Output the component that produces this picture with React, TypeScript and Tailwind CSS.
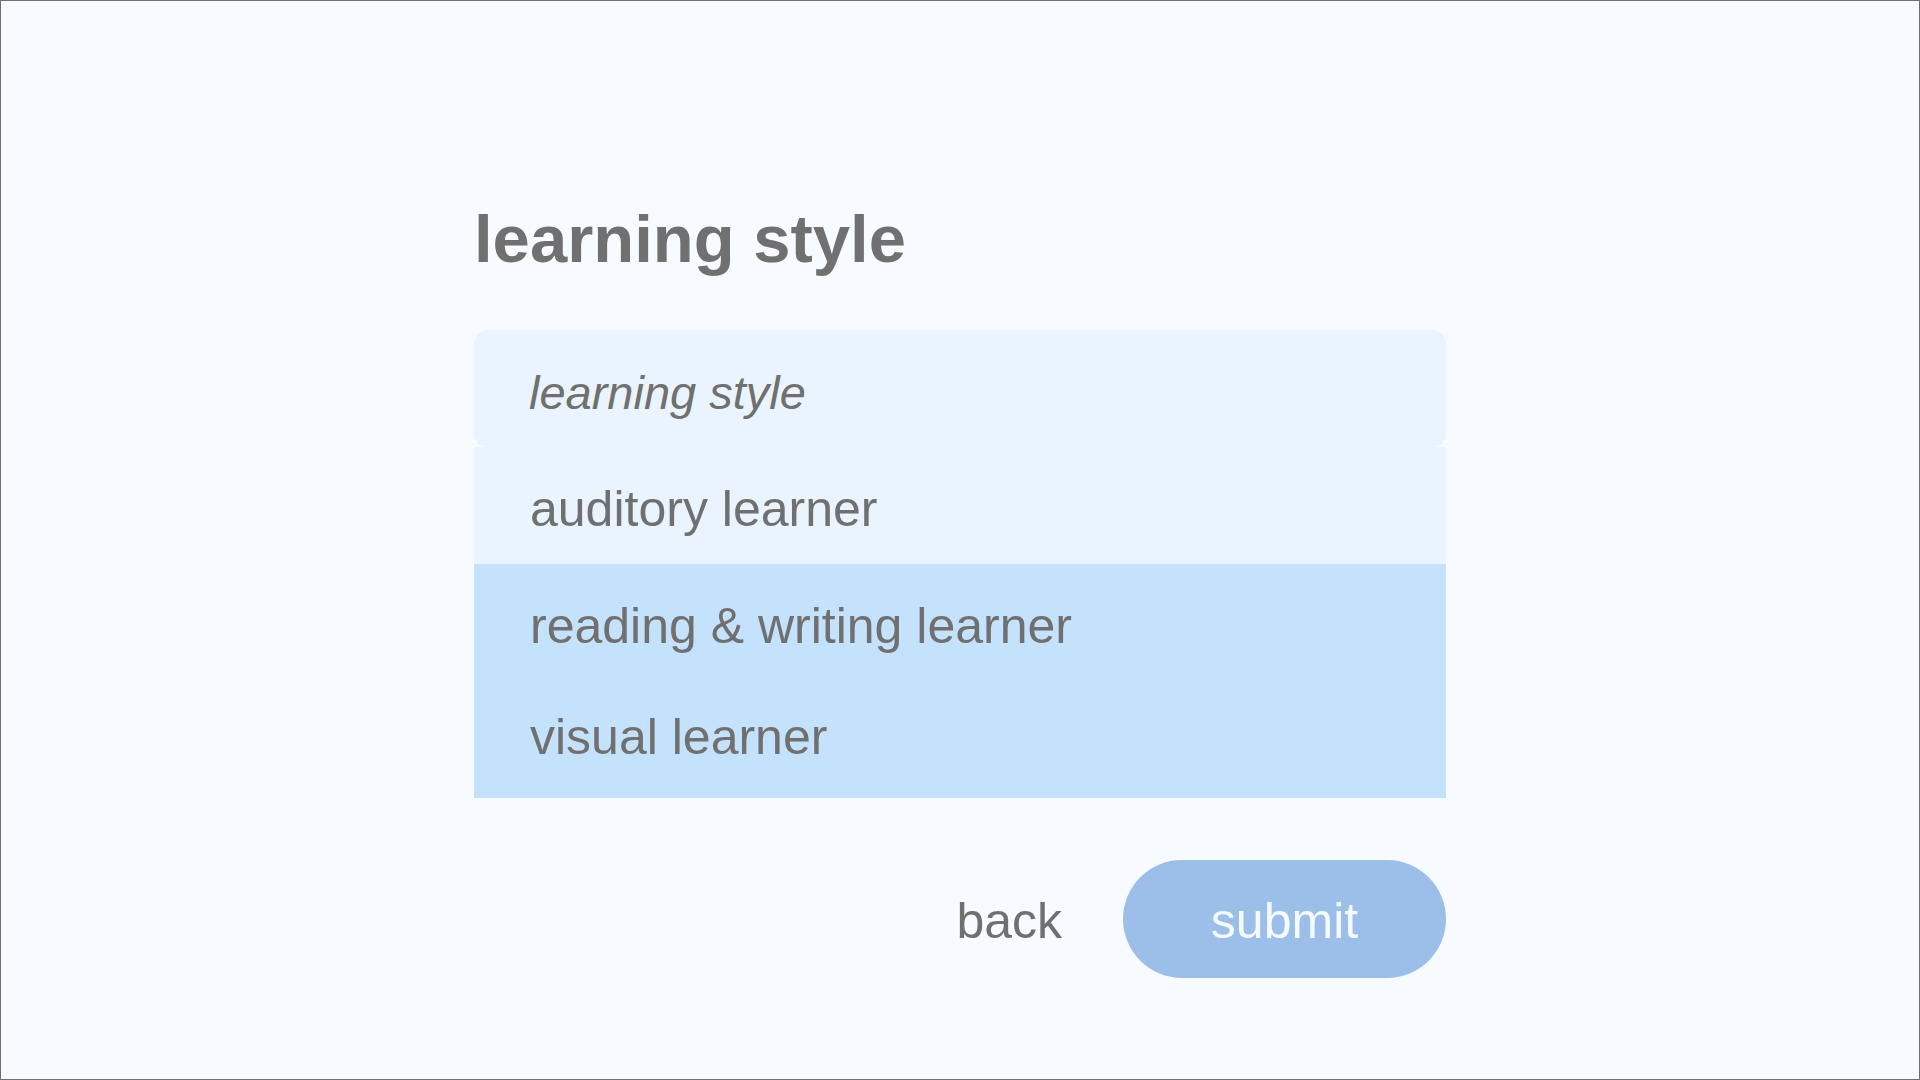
import { useState } from 'react'

const font = 'font-["Liberation_Sans",Helvetica,Arial,sans-serif]'

const options = [
  { label: 'auditory learner', highlighted: false },
  { label: 'reading & writing learner', highlighted: true },
  { label: 'visual learner', highlighted: true },
]

export default function App() {
  const [value, setValue] = useState('')

  return (
    <div className={`box-border h-screen w-full border border-[#6f6f6f] bg-[#f7fbff] ${font} text-[#707070]`}>
      <div className="mx-auto flex w-[972px] flex-col pt-[204px]">
        <h1 className="text-[67px] font-bold leading-none">learning style</h1>

        <input
          className="mt-[58px] h-[117px] w-full rounded-[13px] bg-[#eaf4fe] px-[55px] pt-[7px] text-[47px] italic text-[#707070] outline-none placeholder:italic placeholder:text-[#707070]"
          placeholder="learning style"
          value={value}
          onChange={(e) => setValue(e.target.value)}
        />

        <ul className="flex flex-col">
          <li className="flex h-[117px] items-center bg-[#eaf4fe] px-[56px] pt-[7px] text-[50px]">{options[0].label}</li>
          <li className="flex flex-col bg-[#c5e2fd] pb-[8px] pt-[4px]">
            {options.slice(1).map((o) => (
              <span key={o.label} className="flex h-[111px] items-center px-[56px] pt-[5px] text-[50px]">
                {o.label}
              </span>
            ))}
          </li>
        </ul>

        <div className="mt-[62px] flex items-center justify-end gap-[61px]">
          <button type="button" className="pt-[5px] text-[50px] text-[#707070]">
            back
          </button>
          <button
            type="submit"
            className="flex h-[118px] w-[323px] items-center justify-center rounded-full bg-[#9bbfe8] pt-[5px] text-[50px] text-[#f5faff]"
          >
            submit
          </button>
        </div>
      </div>
    </div>
  )
}
